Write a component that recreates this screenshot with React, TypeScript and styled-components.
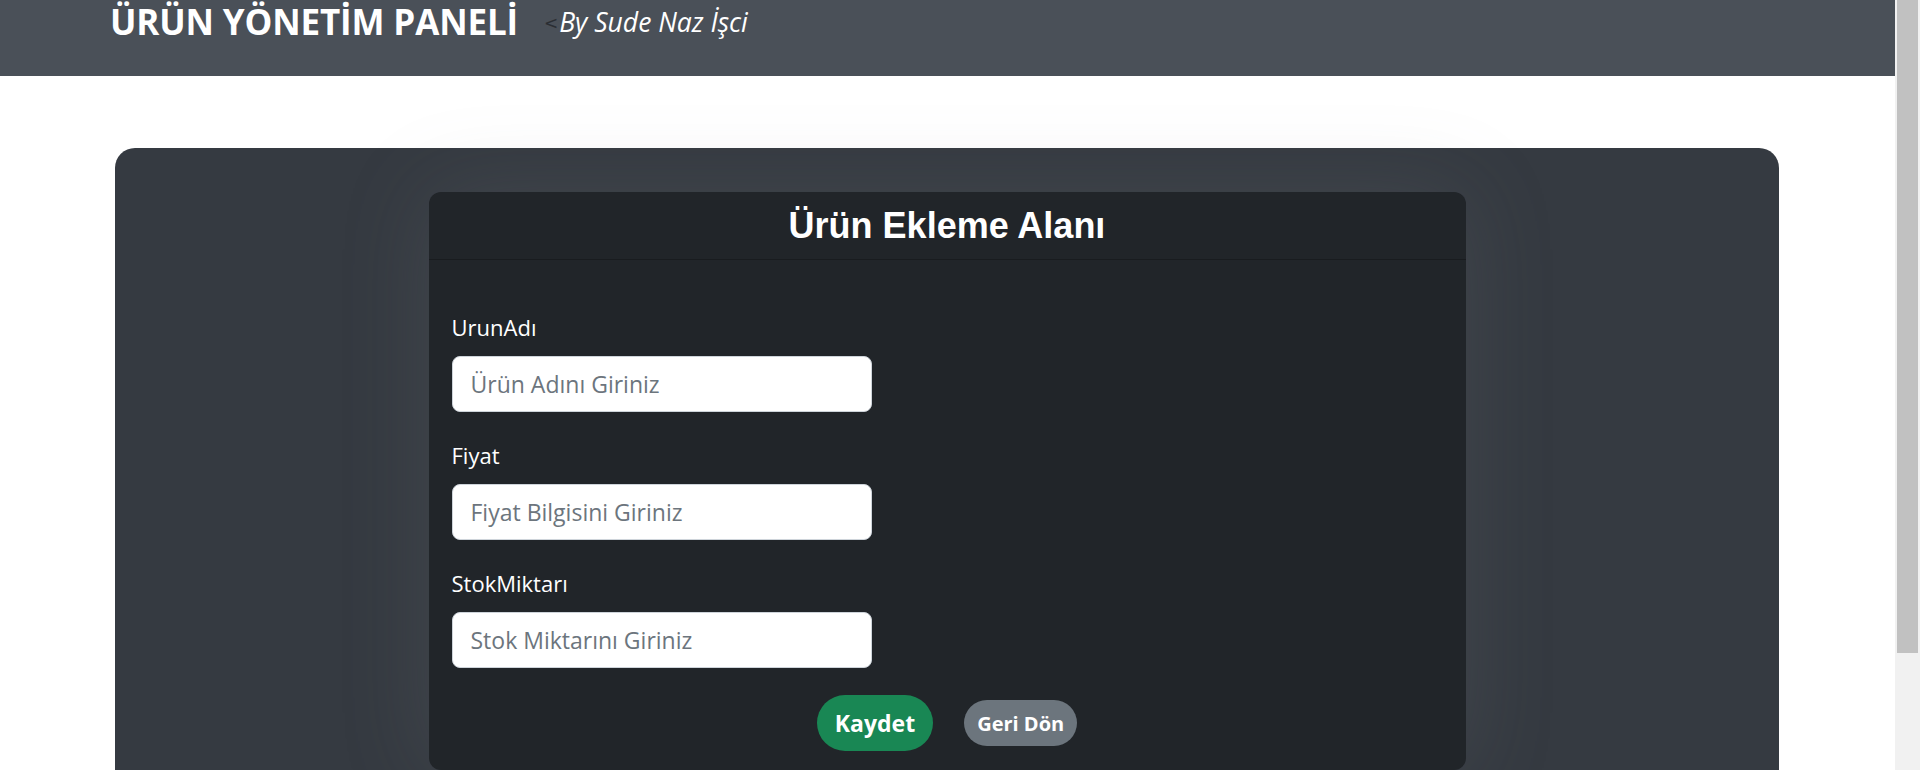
import React from "react";
import styled, { createGlobalStyle } from "styled-components";

const GlobalStyle = createGlobalStyle`
  body {
    margin: 0;
    background: #ffffff;
    font-family: "Open Sans", "Noto Sans", sans-serif;
    color: #212529;
  }
  * { box-sizing: border-box; }
`;

const Page = styled.div`
  padding-right: 25px;
`;

const ScrollTrack = styled.div`
  position: fixed;
  top: 0;
  right: 0;
  width: 25px;
  height: 100vh;
  background: #f1f1f1;
  padding: 0 2px 0 2px;
`;

const ScrollThumb = styled.div`
  height: 653px;
  background: #c1c1c1;
`;

const Header = styled.header`
  height: 76px;
  background: #4a5058;
  display: flex;
  align-items: flex-start;
  padding: 3px 0 0 110px;
`;

const Title = styled.h1`
  margin: 0;
  font-family: "Open Sans", sans-serif;
  font-weight: 700;
  font-size: 35px;
  line-height: 1;
  color: #ffffff;
  letter-spacing: -0.15px;
  padding-top: 1px;
`;

const Byline = styled.div`
  margin: 6px 0 0 26px;
  display: flex;
  align-items: baseline;
  font-size: 26.5px;
  line-height: 1;
`;

const Caret = styled.span`
  color: #2a2e33;
  font-family: "DejaVu Sans", sans-serif;
  font-style: normal;
  font-size: 17px;
  margin-right: 1px;
  position: relative;
  top: -3px;
`;

const Author = styled.span`
  color: #ffffff;
  font-style: italic;
`;

const Panel = styled.main`
  margin: 72px 116px 96px 115px;
  background: #353a41;
  border-radius: 20px;
  padding: 44px 0;
  display: flex;
  justify-content: center;
`;

const Card = styled.section`
  width: 1037px;
  background: #212529;
  border-radius: 12px;
  box-shadow: 0 0 90px rgba(120, 124, 132, 0.2);
`;

const CardHeader = styled.div`
  height: 68px;
  border-bottom: 1px solid #191c1f;
  text-align: center;
`;

const CardTitle = styled.h2`
  margin: 0;
  font-family: "Liberation Sans", Arial, sans-serif;
  font-weight: 700;
  font-size: 36px;
  line-height: 67px;
  color: #ffffff;
`;

const CardBody = styled.form`
  padding: 51px 23px 19px;
  display: flex;
  flex-direction: column;
`;

const Field = styled.div`
  display: flex;
  flex-direction: column;
  align-items: flex-start;
  margin-bottom: 27px;
  &:last-of-type {
    margin-bottom: 24px;
  }
`;

const Label = styled.label`
  font-size: 22px;
  line-height: 33px;
  color: #ffffff;
  margin-bottom: 12px;
`;

const Input = styled.input`
  width: 420px;
  height: 56px;
  border: 1px solid #ced4da;
  border-radius: 8px;
  background: #ffffff;
  padding: 0 18px;
  font-family: "Open Sans", sans-serif;
  font-size: 23px;
  color: #212529;
  outline: none;
  &::placeholder {
    color: #6c757d;
  }
`;

const Actions = styled.div`
  display: flex;
  justify-content: center;
  align-items: center;
  gap: 31px;
`;

const Button = styled.button<{ $variant: "success" | "secondary" }>`
  border: none;
  border-radius: 999px;
  color: #ffffff;
  font-family: "Open Sans", sans-serif;
  font-weight: 700;
  cursor: pointer;
  background: ${(p) => (p.$variant === "success" ? "#198754" : "#6c757d")};
  height: ${(p) => (p.$variant === "success" ? "56px" : "46px")};
  font-size: ${(p) => (p.$variant === "success" ? "23px" : "20px")};
  padding: ${(p) => (p.$variant === "success" ? "0 18px" : "0 13px")};
`;

export default function App() {
  return (
    <Page>
      <GlobalStyle />
      <Header>
        <Title>ÜRÜN YÖNETİM PANELİ</Title>
        <Byline>
          <Caret>&lt;</Caret>
          <Author>By Sude Naz İşci</Author>
        </Byline>
      </Header>
      <Panel>
        <Card>
          <CardHeader>
            <CardTitle>Ürün Ekleme Alanı</CardTitle>
          </CardHeader>
          <CardBody onSubmit={(e) => e.preventDefault()}>
            <Field>
              <Label htmlFor="urunAdi">UrunAdı</Label>
              <Input id="urunAdi" placeholder="Ürün Adını Giriniz" />
            </Field>
            <Field>
              <Label htmlFor="fiyat">Fiyat</Label>
              <Input id="fiyat" placeholder="Fiyat Bilgisini Giriniz" />
            </Field>
            <Field>
              <Label htmlFor="stok">StokMiktarı</Label>
              <Input id="stok" placeholder="Stok Miktarını Giriniz" />
            </Field>
            <Actions>
              <Button type="submit" $variant="success">Kaydet</Button>
              <Button type="button" $variant="secondary">Geri Dön</Button>
            </Actions>
          </CardBody>
        </Card>
      </Panel>
      <ScrollTrack>
        <ScrollThumb />
      </ScrollTrack>
    </Page>
  );
}
